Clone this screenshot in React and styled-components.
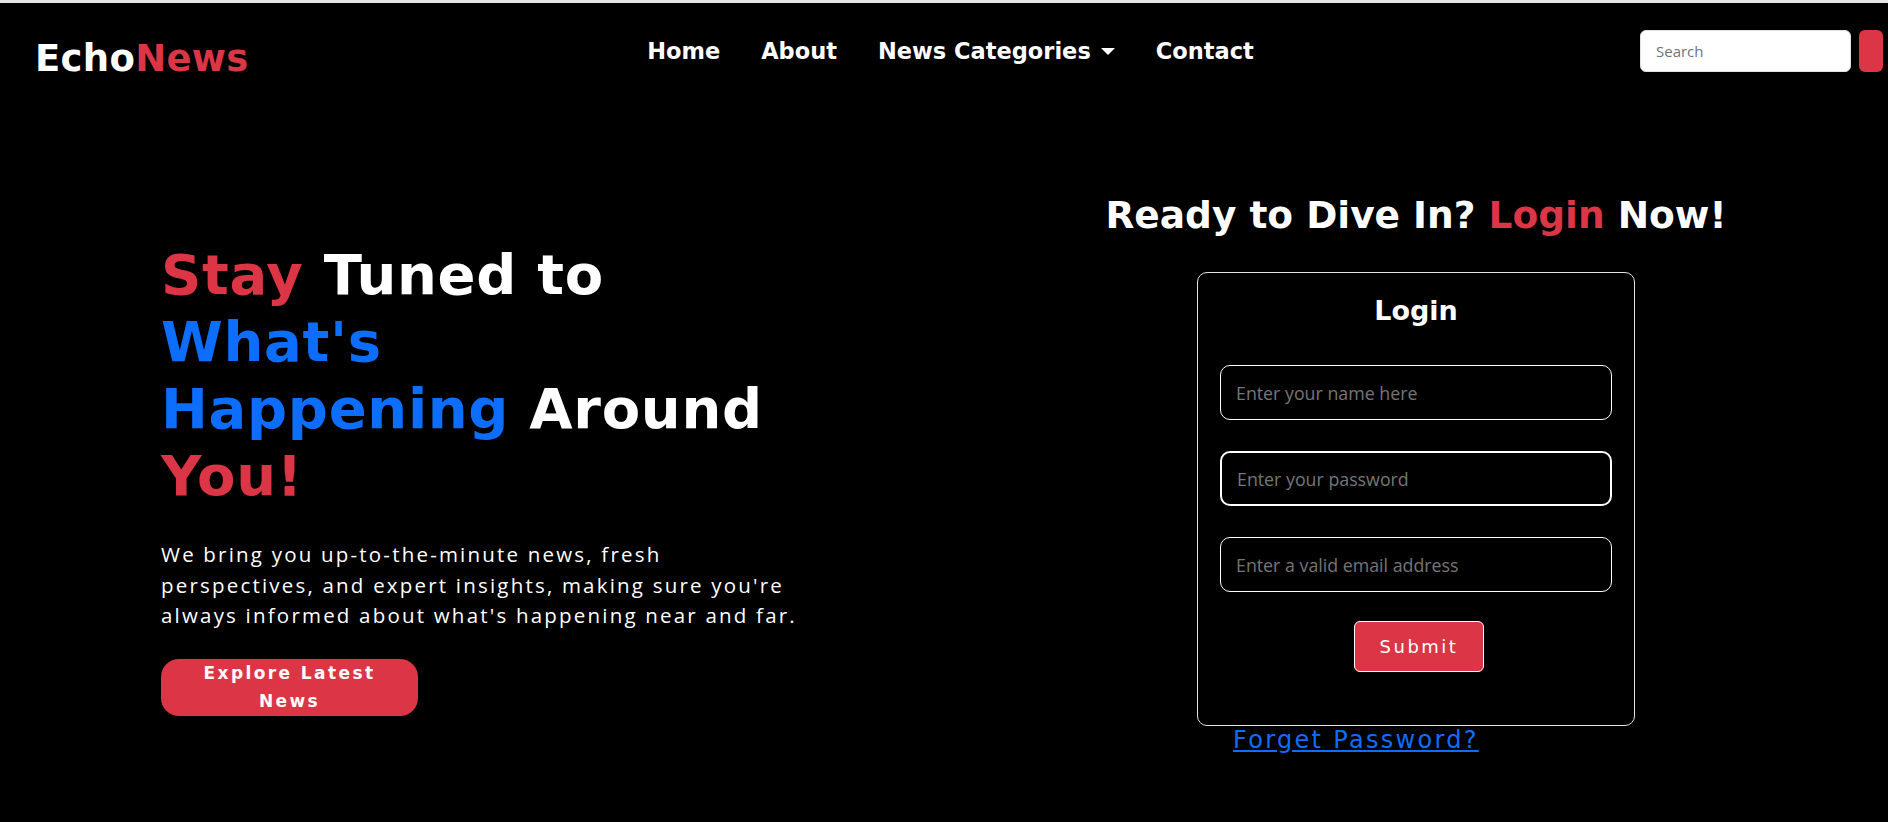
import React from 'react';
import styled, { createGlobalStyle } from 'styled-components';

const red = '#dc3545';
const blue = '#0d6efd';
const display = `"DejaVu Sans", "Inter", sans-serif`;
const text = `"Open Sans", "Noto Sans", sans-serif`;

const GlobalStyle = createGlobalStyle`
    html, body {
        margin: 0;
        padding: 0;
        background: #000;
    }
    body {
        font-family: ${text};
        color: #fff;
    }
    * {
        box-sizing: border-box;
    }
`;

const Page = styled.div`
    min-height: 100vh;
    background: #000;
    border-top: 3px solid #e4e4e4;
`;

const Navbar = styled.nav`
    display: flex;
    align-items: center;
    height: 96px;
    padding: 0 5px 0 35px;
`;

const Brand = styled.a`
    flex: 0 0 214px;
    padding-top: 14px;
    font-family: ${display};
    font-weight: 700;
    font-size: 37px;
    letter-spacing: 0.3px;
    color: #fff;
    text-decoration: none;
    white-space: nowrap;

    span {
        color: ${red};
    }
`;

const NavLinks = styled.ul`
    flex: 1;
    display: flex;
    justify-content: center;
    gap: 41px;
    margin: 0;
    padding: 0 0 0 12px;
    list-style: none;
`;

const NavLink = styled.a`
    display: flex;
    align-items: center;
    font-family: ${display};
    font-weight: 700;
    font-size: 22.5px;
    color: #fff;
    text-decoration: none;
`;

const Caret = styled.span`
    display: inline-block;
    margin-left: 10px;
    border-top: 7px solid #fff;
    border-left: 7px solid transparent;
    border-right: 7px solid transparent;
`;

const SearchForm = styled.form`
    display: flex;
    gap: 8px;
`;

const SearchInput = styled.input`
    width: 211px;
    height: 42px;
    padding: 0 15px;
    border: 1px solid #dee2e6;
    border-radius: 6px;
    background: #fff;
    font-family: ${text};
    font-size: 15px;
    color: #212529;
    outline: none;

    &::placeholder {
        color: #6c757d;
    }
`;

const SearchButton = styled.button`
    width: 24px;
    height: 42px;
    padding: 0;
    border: none;
    border-radius: 6px;
    background: ${red};
`;

const Hero = styled.section`
    display: grid;
    grid-template-columns: 1fr 1fr;
`;

const Intro = styled.div`
    padding: 142px 0 0 161px;
`;

const Headline = styled.h1`
    margin: 0 0 30px;
    font-family: ${display};
    font-weight: 700;
    font-size: 56px;
    line-height: 67px;
    letter-spacing: 0.7px;
    color: #fff;
`;

const Tone = styled.span`
    color: ${({ $color }) => $color};
`;

const Lead = styled.p`
    width: 650px;
    margin: 0 0 28px;
    font-family: ${text};
    font-size: 20.5px;
    line-height: 30.5px;
    letter-spacing: 2.2px;
    color: #fff;
`;

const ExploreButton = styled.button`
    width: 257px;
    height: 57px;
    padding: 0 30px;
    border: none;
    border-radius: 18px;
    background: ${red};
    color: #fff;
    font-family: ${display};
    font-weight: 700;
    font-size: 17px;
    line-height: 28px;
    letter-spacing: 2.4px;
`;

const LoginSide = styled.div`
    display: flex;
    flex-direction: column;
    align-items: center;
    padding-top: 93px;
`;

const LoginHeading = styled.h2`
    margin: 0 0 34px;
    font-family: ${display};
    font-weight: 700;
    font-size: 37.5px;
    line-height: 46px;
    color: #fff;
`;

const LoginCard = styled.form`
    display: flex;
    flex-direction: column;
    align-items: center;
    width: 438px;
    padding: 22px 22px 53px;
    border: 1px solid #e4e4e4;
    border-radius: 10px;
`;

const CardTitle = styled.h3`
    margin: 0 0 38px;
    font-family: ${display};
    font-weight: 700;
    font-size: 27px;
    line-height: 32px;
    color: #fff;
`;

const Field = styled.input`
    width: 100%;
    height: 55px;
    margin-bottom: 31px;
    padding: 0 15px;
    border: ${({ $focused }) => ($focused ? 2 : 1)}px solid #fff;
    border-radius: 10px;
    background: #000;
    font-family: ${text};
    font-size: 17.8px;
    color: #fff;
    outline: none;

    &::placeholder {
        color: #767676;
    }
`;

const SubmitButton = styled.button`
    width: 130px;
    height: 51px;
    margin: -2px 0 0 6px;
    border: 1px solid #fff;
    border-radius: 6px;
    background: ${red};
    color: #fff;
    font-family: ${display};
    font-size: 18px;
    letter-spacing: 2.5px;
`;

const ForgetRow = styled.div`
    width: 438px;
    padding-left: 36px;
`;

const ForgetLink = styled.a`
    font-family: ${display};
    font-size: 24px;
    line-height: 29px;
    letter-spacing: 2.3px;
    color: ${blue};
    text-decoration: underline;
`;

const App = () => {
    return (
        <Page>
            <GlobalStyle />
            <Navbar>
                <Brand href="#">
                    Echo<span>News</span>
                </Brand>
                <NavLinks>
                    <li><NavLink href="#">Home</NavLink></li>
                    <li><NavLink href="#">About</NavLink></li>
                    <li>
                        <NavLink href="#">
                            News Categories <Caret />
                        </NavLink>
                    </li>
                    <li><NavLink href="#">Contact</NavLink></li>
                </NavLinks>
                <SearchForm onSubmit={(e) => e.preventDefault()}>
                    <SearchInput type="search" placeholder="Search" />
                    <SearchButton type="submit" aria-label="Search" />
                </SearchForm>
            </Navbar>
            <Hero>
                <Intro>
                    <Headline>
                        <Tone $color={red}>Stay</Tone> Tuned to
                        <br />
                        <Tone $color={blue}>What's</Tone>
                        <br />
                        <Tone $color={blue}>Happening</Tone> Around
                        <br />
                        <Tone $color={red}>You!</Tone>
                    </Headline>
                    <Lead>
                        We bring you up-to-the-minute news, fresh perspectives, and expert insights,
                        making sure you're always informed about what's happening near and far.
                    </Lead>
                    <ExploreButton>Explore Latest News</ExploreButton>
                </Intro>
                <LoginSide>
                    <LoginHeading>
                        Ready to Dive In? <Tone $color={red}>Login</Tone> Now!
                    </LoginHeading>
                    <LoginCard onSubmit={(e) => e.preventDefault()}>
                        <CardTitle>Login</CardTitle>
                        <Field type="text" placeholder="Enter your name here" />
                        <Field type="password" placeholder="Enter your password" $focused />
                        <Field type="email" placeholder="Enter a valid email address" />
                        <SubmitButton type="submit">Submit</SubmitButton>
                    </LoginCard>
                    <ForgetRow>
                        <ForgetLink href="#">Forget Password?</ForgetLink>
                    </ForgetRow>
                </LoginSide>
            </Hero>
        </Page>
    );
};

export default App;
